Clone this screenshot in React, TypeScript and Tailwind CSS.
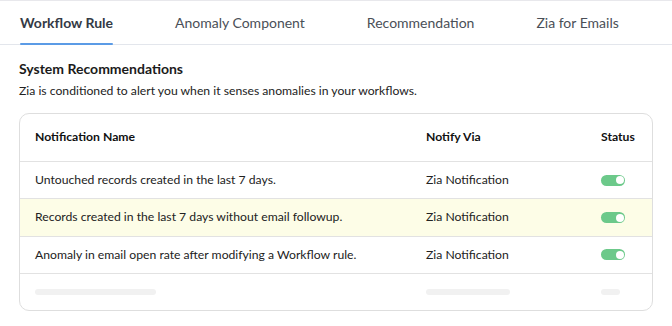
const tabs = ["Workflow Rule", "Anomaly Component", "Recommendation", "Zia for Emails"];

const rows = [
  { name: "Untouched records created in the last 7 days.", via: "Zia Notification", hl: false },
  { name: "Records created in the last 7 days without email followup.", via: "Zia Notification", hl: true },
  { name: "Anomaly in email open rate after modifying a Workflow rule.", via: "Zia Notification", hl: false },
];

function Toggle() {
  return (
    <div className="w-[24px] h-[11px] rounded-full bg-[#6cc98a] flex items-center justify-end pr-[1.5px]">
      <div className="w-[8px] h-[8px] rounded-full bg-white" />
    </div>
  );
}

export default function App() {
  return (
    <div className="w-[672px] h-[326px] bg-white text-[#222] font-['Lato','Open_Sans',sans-serif] border-t border-[#e8e8ec]">
      {/* Tabs */}
      <div className="flex gap-[62px] pl-5 h-[44px] border-b border-[#e3e6ec]">
        {tabs.map((t, i) => (
          <div
            key={t}
            className={
              i === 0
                ? "relative flex items-center text-[14px] font-bold text-[#343a45]"
                : "relative flex items-center text-[14px] text-[#4a4f57]"
            }
          >
            {t}
            {i === 0 && <div className="absolute left-0 right-0 bottom-[-1px] h-[2px] bg-[#5b9be6] rounded-full" />}
          </div>
        ))}
      </div>

      <div className="px-[19px]">
        <h2 className="mt-[15px] text-[14px] font-bold text-[#1b1b1b] leading-[18px]">System Recommendations</h2>
        <p className="mt-[4px] text-[12.2px] text-[#222] leading-[18px]">
          Zia is conditioned to alert you when it senses anomalies in your workflows.
        </p>

        <div className="mt-[13px] border border-[#dedede] rounded-[10px] overflow-hidden">
          <div className="grid grid-cols-[391px_175px_1fr] pl-[15px] h-[48px] items-center text-[12.2px] font-bold text-[#111] border-b border-[#e2e2e2]">
            <div>Notification Name</div>
            <div>Notify Via</div>
            <div>Status</div>
          </div>
          {rows.map((r) => (
            <div
              key={r.name}
              className={
                "grid grid-cols-[391px_175px_1fr] pl-[15px] h-[37.4px] items-center text-[12.2px] border-b border-[#e2e2e2] " +
                (r.hl ? "bg-[#fdfde7]" : "bg-white")
              }
            >
              <div>{r.name}</div>
              <div>{r.via}</div>
              <div>
                <Toggle />
              </div>
            </div>
          ))}
          <div className="grid grid-cols-[391px_175px_1fr] pl-[15px] h-[36px] items-center">
            <div className="w-[121px] h-[6px] rounded-full bg-[#f1f1f1]" />
            <div className="w-[84px] h-[6px] rounded-full bg-[#f1f1f1]" />
            <div className="w-[19px] h-[6px] rounded-full bg-[#f1f1f1]" />
          </div>
        </div>
      </div>
    </div>
  );
}
